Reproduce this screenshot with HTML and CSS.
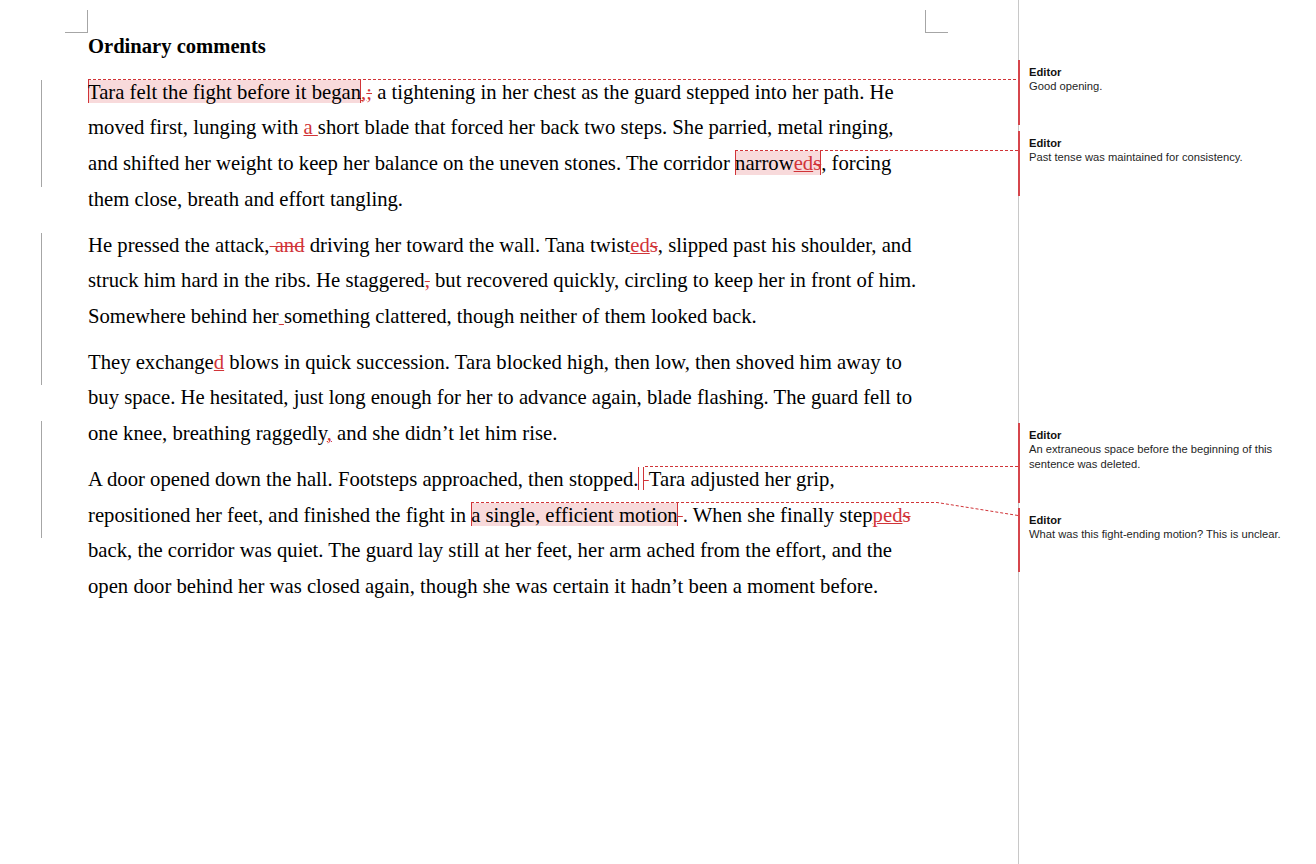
FILE: index.html
```html
<!DOCTYPE html>
<html lang="en">
<head>
<meta charset="utf-8">
<title>Ordinary comments</title>
<link rel="stylesheet" href="styles.css">
</head>
<body>
<div class="app">
  <main class="doc">
    <div class="marks"><span class="corner corner-l"></span><span class="corner corner-r"></span></div>
    <h1 class="title">Ordinary comments</h1>
    <p class="para">
      <span class="ln chg"><span class="hl">Tara felt the fight before it began</span><ins>,</ins><del>;</del> a tightening in her chest as the guard stepped into her path. He</span>
      <span class="ln chg">moved first, lunging with <ins>a </ins>short blade that forced her back two steps. She parried, metal ringing,</span>
      <span class="ln chg">and shifted her weight to keep her balance on the uneven stones. The corridor <span class="hl">narrow<ins>ed</ins><del>s</del></span>, forcing</span>
      <span class="ln">them close, breath and effort tangling.</span>
    </p>
    <p class="para">
      <span class="ln chg">He pressed the attack,<del> and</del> driving her toward the wall. Tana twist<ins>ed</ins><del>s</del>, slipped past his shoulder, and</span>
      <span class="ln chg">struck him hard in the ribs. He staggered<del>,</del> but recovered quickly, circling to keep her in front of him.</span>
      <span class="ln chg ext">Somewhere behind her<ins>&nbsp;</ins>something clattered, though neither of them looked back.</span>
    </p>
    <p class="para">
      <span class="ln chg">They exchange<ins>d</ins> blows in quick succession. Tara blocked high, then low, then shoved him away to</span>
      <span class="ln">buy space. He hesitated, just long enough for her to advance again, blade flashing. The guard fell to</span>
      <span class="ln chg ext">one knee, breathing raggedly<ins>,</ins> and she didn’t let him rise.</span>
    </p>
    <p class="para">
      <span class="ln chg">A door opened down the hall. Footsteps approached, then stopped.<span class="hl hl-empty">&nbsp;</span><del>&nbsp;</del>Tara adjusted her grip,</span>
      <span class="ln chg">repositioned her feet, and finished the fight in <span class="hl">a single, efficient motion</span><del>&nbsp;</del>. When she finally step<ins>ped</ins><del>s</del></span>
      <span class="ln">back, the corridor was quiet. The guard lay still at her feet, her arm ached from the effort, and the</span>
      <span class="ln">open door behind her was closed again, though she was certain it hadn’t been a moment before.</span>
    </p>
  </main>
  <aside class="pane">
    <div class="comment c1"><div class="author">Editor</div><div class="ctext">Good opening.</div></div>
    <div class="comment c2"><div class="author">Editor</div><div class="ctext">Past tense was maintained for consistency.</div></div>
    <div class="comment c3"><div class="author">Editor</div><div class="ctext">An extraneous space before the beginning of this sentence was deleted.</div></div>
    <div class="comment c4"><div class="author">Editor</div><div class="ctext">What was this fight-ending motion? This is unclear.</div></div>
  </aside>
</div>
<svg class="links" width="1316" height="864" viewBox="0 0 1316 864" aria-hidden="true">
  <g stroke="#d13438" stroke-width="1" stroke-dasharray="3 2" fill="none">
    <path d="M88 79.5 H1018"/>
    <path d="M735 150.5 H1018"/>
    <path d="M645 466.5 H1018"/>
    <path d="M471 502.5 H937 L1018 515.5"/>
  </g>
</svg>
</body>
</html>
```
FILE: styles.css
```css
* { box-sizing: border-box; }
html, body { margin: 0; padding: 0; background: #ffffff; }
body {
  width: 1316px;
  height: 864px;
  overflow: hidden;
  position: relative;
  font-family: "Liberation Serif", "Times New Roman", serif;
  color: #000000;
}
.app { display: flex; height: 864px; }
.doc { width: 1018px; flex: none; padding-top: 10px; }
.marks {
  display: flex;
  justify-content: space-between;
  margin-left: 65px;
  width: 883px;
}
.corner { width: 23px; height: 23px; border-bottom: 1px solid #a6a6a6; }
.corner-l { border-right: 1px solid #a6a6a6; }
.corner-r { border-left: 1px solid #a6a6a6; }
.title {
  margin: 1.3px 0 16.4px 88px;
  font-size: 20.6px;
  line-height: 24px;
  font-weight: bold;
}
.para {
  margin: 0 0 10.2px 88px;
  font-size: 20.7px;
  line-height: 35.67px;
}
.ln { display: block; white-space: nowrap; position: relative; }
.chg::before {
  content: "";
  position: absolute;
  left: -47px;
  top: 5px;
  bottom: -5px;
  border-left: 1px solid #a6a6a6;
}
.chg.ext::before { bottom: -15.2px; }
ins {
  color: #d13438;
  text-decoration: underline;
  text-decoration-thickness: 1px;
}
del {
  color: #d13438;
  text-decoration: line-through;
  text-decoration-thickness: 1px;
}
.hl {
  background: #f8dadb;
  padding: 1px 0 0.5px;
  box-shadow: inset 1px 0 #d13438, inset -1px 0 #d13438;
}
.hl-empty { background: transparent; }
.pane {
  flex: 1;
  border-left: 1px solid #c8c8c8;
  padding-top: 60px;
  font-family: "Liberation Sans", Arial, sans-serif;
  font-size: 11.2px;
  line-height: 14.5px;
  color: #1f1f1f;
}
.comment {
  margin-left: -1px;
  border-left: 2px solid #d6464c;
  padding: 4.5px 21px 0 9px;
  height: 65px;
  margin-bottom: 6px;
}
.c2 { margin-bottom: 227px; }
.c3 { height: 80px; margin-bottom: 5px; }
.c4 { height: 64px; }
.author { font-weight: bold; color: #111111; }
.links { position: absolute; left: 0; top: 0; pointer-events: none; }
```
